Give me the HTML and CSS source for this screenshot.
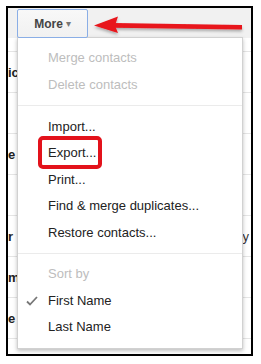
FILE: index.html
```html
<!DOCTYPE html>
<html>
<head>
<meta charset="utf-8">
<link rel="stylesheet" href="styles.css">
</head>
<body>
<div class="frame">
  <div class="toolbar">
    <button class="more">More <span class="caret">&#9662;</span></button>
  </div>
  <div class="list">
    <div class="row head"></div>
    <div class="row"><span class="frag">ic</span></div>
    <div class="row"></div>
    <div class="row"><span class="frag">e</span></div>
    <div class="row"></div>
    <div class="row"><span class="frag">r</span><span class="frag-r">y</span></div>
    <div class="row"><span class="frag">m</span></div>
    <div class="row"><span class="frag">e</span></div>
  </div>
  <div class="menu">
    <div class="group first">
      <div class="item disabled">Merge contacts</div>
      <div class="item disabled">Delete contacts</div>
    </div>
    <div class="sep"></div>
    <div class="group">
      <div class="item">Import...</div>
      <div class="item">Export...<span class="callout"></span></div>
      <div class="item">Print...</div>
      <div class="item">Find &amp; merge duplicates...</div>
      <div class="item">Restore contacts...</div>
    </div>
    <div class="sep"></div>
    <div class="group">
      <div class="item disabled">Sort by</div>
      <div class="item"><svg class="check" width="12" height="10" viewBox="0 0 12 10"><polyline points="1,5.5 4,8.5 11,1" fill="none" stroke="#777" stroke-width="1.8"/></svg>First Name</div>
      <div class="item">Last Name</div>
    </div>
  </div>
</div>
<svg class="arrow" width="261" height="50" viewBox="0 0 261 50">
  <defs>
    <filter id="sh" x="-10%" y="-50%" width="120%" height="200%">
      <feDropShadow dx="0" dy="2" stdDeviation="1.5" flood-color="#000" flood-opacity="0.3"/>
    </filter>
  </defs>
  <g filter="url(#sh)" fill="#e8141b">
    <polygon points="114,23 242,25 242,29.5 114,27.8"/>
    <polygon points="94,25.5 118,16.5 115,25.5 118,33"/>
  </g>
</svg>
</body>
</html>
```
FILE: styles.css
```css
html, body {
  margin: 0;
  padding: 0;
  background: #fff;
}
body {
  width: 261px;
  height: 364px;
  overflow: hidden;
  position: relative;
  font-family: "Liberation Sans", Arial, sans-serif;
}
.frame {
  margin: 6px 0 0 6px;
  width: 243px;
  height: 346px;
  border: 2px solid #000;
  position: relative;
  background: #fff;
}
.toolbar {
  height: 30px;
  background: #f1f1f1;
  padding-left: 9px;
  box-sizing: border-box;
  padding-top: 1px;
  display: flex;
}
.more {
  width: 71px;
  height: 29px;
  border: 1px solid #8aaee6;
  border-radius: 2px;
  background: linear-gradient(#f8f8f8, #f1f1f1);
  font-family: "Liberation Sans", Arial, sans-serif;
  font-weight: bold;
  font-size: 12px;
  color: #444;
  padding: 0;
  display: flex;
  align-items: center;
  justify-content: center;
  gap: 3px;
  position: relative;
  z-index: 3;
}
.caret {
  font-size: 10px;
  color: #777;
  font-weight: normal;
}
.list {
  display: flex;
  flex-direction: column;
}
.row {
  height: 40px;
  border-bottom: 1px solid #e5e5e5;
  display: flex;
  align-items: center;
  justify-content: space-between;
  font-size: 13px;
  font-weight: bold;
  color: #222;
}
.row.head {
  height: 13px;
}
.frag {
  padding-left: 0;
}
.frag-r {
  font-weight: normal;
  color: #333;
  padding-right: 2px;
}
.menu {
  position: absolute;
  left: 9px;
  top: 29px;
  width: 226px;
  height: 312px;
  box-sizing: border-box;
  background: #fff;
  border: 1px solid rgba(0,0,0,0.18);
  box-shadow: 0 2px 4px rgba(0,0,0,0.25);
  padding: 6px 0 8px;
  z-index: 2;
  display: flex;
  flex-direction: column;
}
.group {
  display: flex;
  flex-direction: column;
}
.sep {
  height: 1px;
  background: #ebebeb;
  margin: 7px 0;
}
.item {
  height: 26.5px;
  display: flex;
  align-items: center;
  padding-left: 30px;
  font-size: 13px;
  color: #222;
  position: relative;
  white-space: nowrap;
}
.group.first .item {
  height: 27px;
}
.item.disabled {
  color: #bdbdbd;
}
.check {
  position: absolute;
  left: 8px;
  top: 9px;
}
.callout {
  position: absolute;
  left: 20px;
  top: -4px;
  width: 64px;
  height: 33px;
  box-sizing: border-box;
  border: 4px solid #e3121b;
  border-radius: 5px;
}
.arrow {
  position: absolute;
  left: 0;
  top: 0;
  z-index: 4;
}
```
